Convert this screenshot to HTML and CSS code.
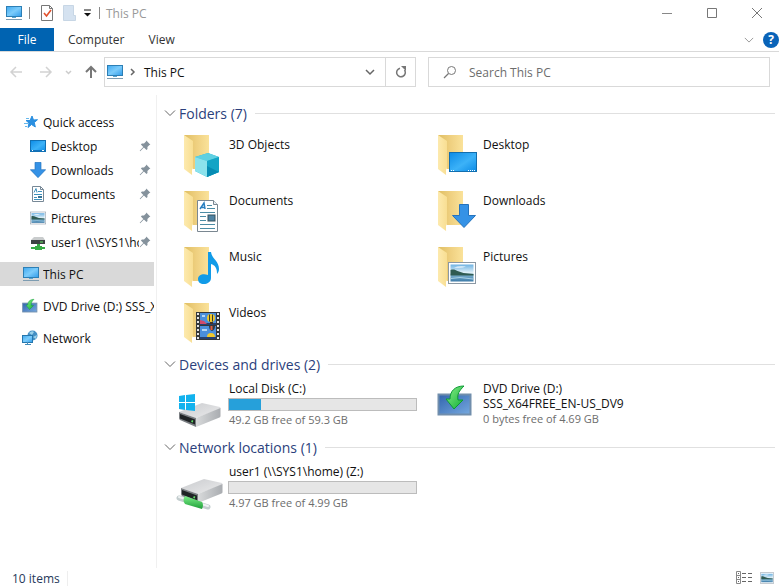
FILE: index.html
```html
<!DOCTYPE html>
<html lang="en">
<head>
<meta charset="utf-8">
<title>This PC</title>
<link rel="stylesheet" href="styles.css">
</head>
<body>
<svg class="defs" width="0" height="0" aria-hidden="true">
  <defs>
    <linearGradient id="screen" x1="0" y1="0" x2="1" y2="1"><stop offset="0" stop-color="#3fa9f0"/><stop offset=".5" stop-color="#7cccfb"/><stop offset="1" stop-color="#2f9bea"/></linearGradient>
    <linearGradient id="desk" x1="0" y1="0" x2="1" y2="1"><stop offset="0" stop-color="#0c8be6"/><stop offset=".55" stop-color="#3cb2f8"/><stop offset="1" stop-color="#0a8ae6"/></linearGradient>
    <linearGradient id="flap" x1="0" y1="0" x2="1" y2="0"><stop offset="0" stop-color="#fdeaae"/><stop offset="1" stop-color="#f8de92"/></linearGradient>
    <linearGradient id="back" x1="0" y1="0" x2="1" y2="0"><stop offset="0" stop-color="#dfbe62"/><stop offset=".5" stop-color="#efd080"/><stop offset="1" stop-color="#fae29a"/></linearGradient>
    <linearGradient id="top" x1="0" y1="0" x2="1" y2="1"><stop offset="0" stop-color="#c9cbce"/><stop offset="1" stop-color="#ebebec"/></linearGradient>
    <linearGradient id="edge" x1="0" y1="0" x2="1" y2="0"><stop offset="0" stop-color="#d8dadb"/><stop offset="1" stop-color="#a9acb0"/></linearGradient>
    <linearGradient id="green" x1="0" y1="0" x2="1" y2="1"><stop offset="0" stop-color="#8cf08a"/><stop offset="1" stop-color="#0fae35"/></linearGradient>
    <linearGradient id="pipe" x1="0" y1="0" x2="0" y2="1"><stop offset="0" stop-color="#7df08a"/><stop offset="1" stop-color="#1f9e38"/></linearGradient>
    <linearGradient id="sky" x1="0" y1="0" x2="0" y2="1"><stop offset="0" stop-color="#6eb2e2"/><stop offset=".5" stop-color="#e4f2f8"/><stop offset=".6" stop-color="#7fb3d0"/><stop offset="1" stop-color="#3c7aa8"/></linearGradient>
    <linearGradient id="blue" x1="0" y1="0" x2="1" y2="1"><stop offset="0" stop-color="#3164ad"/><stop offset="1" stop-color="#76a9e0"/></linearGradient>
  </defs>
  <symbol id="pc" viewBox="0 0 18 18">
    <rect x="1.5" y="2.5" width="15" height="10" fill="url(#screen)" stroke="#2d7fb5"/>
    <path d="M7 13h4v1H7z" fill="#58a5cf"/><path d="M1 15.500h16" stroke="#7d9cb1"/>
  </symbol>
  <symbol id="pin" viewBox="0 0 12 12">
    <path d="M7.300.6l4.100 4.100-1 .4-2 2 .1 2-1 1L4.900 7.500 1.200 11.200.7 10.700 4.300 6.900 1.900 4.400l1-1 2.100.2 2-2z" fill="#85929c"/>
  </symbol>
  <symbol id="folder" viewBox="0 0 48 48">
    <path d="M8 3h25v34H16z" fill="url(#back)"/>
    <path d="M8 3l9 6v27l-1 7-8-6z" fill="url(#flap)"/>
    <path d="M16 38l1-2v6h-1z" fill="#fff"/>
  </symbol>
  <symbol id="picture" viewBox="0 0 28 22">
    <rect x=".5" y=".5" width="27" height="21" fill="#fff" stroke="#8b98a4"/>
    <rect x="2.500" y="2.500" width="23" height="17" fill="url(#sky)"/>
    <path d="M2.500 8c3-1 5 0 7 1l6 2 10 1v1.500h-23z" fill="#2f5b52"/>
    <path d="M6 5.500q5-2 12-1-4 2-12 1" fill="#fff" opacity=".8"/>
    <path d="M3 16.500l9-1 13 1.500" stroke="#a9d2e6" fill="none"/>
  </symbol>
  <symbol id="down" viewBox="0 0 24 24">
    <path d="M7.500.5h9v11h7L12 23.500.5 11.500h7z" fill="#3592e6" stroke="#2573bd"/>
  </symbol>
  <symbol id="chev" viewBox="0 0 12 12"><path d="M1 3.500l5 5 5-5" fill="none" stroke="currentColor"/></symbol>
  <symbol id="dvd" viewBox="0 0 36 32">
    <rect x="1.500" y="9.500" width="32" height="20" fill="url(#blue)" stroke="#718eac" stroke-width="2"/>
    <path d="M27 1C18 1 13 6 13 14H9l8 10 9-9h-5c-1-6 1-9 6-14z" fill="url(#green)" stroke="#0c9a35"/>
  </symbol>
  <symbol id="drive" viewBox="0 0 44 24">
    <path d="M1 9L24 0l18 4q1 1 0 2L18 15z" fill="url(#top)"/>
    <path d="M1 9l17 6v9L2 17q-1-1-1-2z" fill="#7b7f83"/><path d="M2 11l15 5.500v5L2 15.500z" fill="#1f2325"/>
    <path d="M18 15L42.500 5v8q0 1-1 1.500L18 24z" fill="url(#edge)"/><path d="M13.500 18l1.500.6" stroke="#63e46a" stroke-width="2"/>
  </symbol>
</svg>

<header>
  <div class="titlebar">
    <svg class="i18" aria-hidden="true"><use href="#pc"/></svg>
    <i class="bar"></i>
    <button class="tool" aria-label="Properties"><svg width="12" height="16"><path d="M.5.5h8l3 3v12H.5z" fill="#fff" stroke="#777"/><path d="M8.500.5v3h3" fill="none" stroke="#777"/><path d="M3 8l2.500 3L10 5" fill="none" stroke="#e2502b" stroke-width="1.600"/></svg></button>
    <button class="tool" aria-label="New folder"><svg width="13" height="16"><path d="M.5.5h10v10h2v5H.5z" fill="#d5e2f0" stroke="#c7d6e5"/></svg></button>
    <button class="customize" aria-label="Customize"><svg width="7" height="8"><path d="M0 1h7" stroke="#111"/><path d="M0 4h7L3.500 7.500z" fill="#111"/></svg></button>
    <i class="bar"></i>
    <span class="title">This PC</span>
    <div class="window">
      <button aria-label="Minimize"><svg width="12" height="12"><path d="M1 6.500h10" stroke="#888"/></svg></button>
      <button aria-label="Maximize"><svg width="12" height="12"><path d="M1.500 1.500h9v9h-9z" fill="none" stroke="#777"/></svg></button>
      <button aria-label="Close"><svg width="12" height="12"><path d="M1 1l10 10M11 1L1 11" stroke="#777"/></svg></button>
    </div>
  </div>
  <nav class="tabs">
    <button class="file">File</button><button>Computer</button><button>View</button>
    <div class="help">
      <button aria-label="Expand ribbon"><svg width="10" height="10"><use href="#chev"/></svg></button>
      <button class="question" aria-label="Help">?</button>
    </div>
  </nav>
  <div class="address">
    <div class="arrows">
      <button aria-label="Back"><svg width="14" height="14"><path d="M13 7H2M7 2L2 7l5 5" fill="none" stroke="#d2d2d2" stroke-width="1.500"/></svg></button>
      <button aria-label="Forward"><svg width="14" height="14"><path d="M1 7h11M7 2l5 5-5 5" fill="none" stroke="#d2d2d2" stroke-width="1.500"/></svg></button>
      <button class="faint" aria-label="Recent"><svg width="7" height="7"><path d="M1 2l2.500 2.500L6 2" fill="none" stroke="#ccc" stroke-width="1.500"/></svg></button>
      <button aria-label="Up"><svg width="14" height="14"><path d="M7 13V2M2 7l5-5 5 5" fill="none" stroke="#777" stroke-width="2"/></svg></button>
    </div>
    <div class="path">
      <svg class="i18" aria-hidden="true"><use href="#pc"/></svg>
      <svg width="6" height="8" aria-hidden="true"><path d="M1 1l3 3-3 3" fill="none" stroke="#666" stroke-width="1.500"/></svg>
      <span>This PC</span>
      <button class="drop" aria-label="Locations"><svg width="10" height="10"><path d="M1 3l4 4 4-4" fill="none" stroke="#666" stroke-width="1.500"/></svg></button>
      <button class="refresh" aria-label="Refresh"><svg width="12" height="12"><path d="M9.500 4A4.300 4.300 0 1 1 5 2.300" fill="none" stroke="#777" stroke-width="1.500"/><path d="M6 0h5v5z" fill="#777"/></svg></button>
    </div>
    <label class="search">
      <svg width="14" height="14" aria-hidden="true"><circle cx="8.500" cy="5.500" r="4" fill="none" stroke="#777"/><path d="M5.500 8.500L1 13" stroke="#777" stroke-width="1.200"/></svg>
      <input type="search" placeholder="Search This PC" aria-label="Search This PC">
    </label>
  </div>
</header>

<div class="body">
  <nav class="side">
    <ul>
      <li><a href="#"><svg class="i16"><path d="M10 2l1.500 4 4-.3-3.200 2.800 1 4.500-3.800-2.500L6 13.500l1-4.500-3-2.500h4z" fill="#2b8fe0" stroke="#2b8fe0" stroke-linejoin="round"/><path d="M4 4.500h3M2 9.500h4M3 12.500h2" stroke="#65b7ec"/></svg><span>Quick access</span></a></li>
      <li class="sub"><a href="#"><svg class="i16"><rect x=".5" y="2.500" width="15" height="11" fill="url(#desk)" stroke="#1170b4"/><path d="M1 12.500h14" stroke="#1273bd"/><path d="M2 12.500h1M12 12.500h2" stroke="#fff"/></svg><span>Desktop</span></a><svg class="pin"><use href="#pin"/></svg></li>
      <li class="sub"><a href="#"><svg class="i16"><use href="#down"/></svg><span>Downloads</span></a><svg class="pin"><use href="#pin"/></svg></li>
      <li class="sub"><a href="#"><svg class="i16"><path d="M2.500.5h8l3 3v12h-11z" fill="#fff" stroke="#778896"/><path d="M10.500.5v3h3" fill="none" stroke="#778896"/><path d="M4 6.500l2-4 1 4M8 5.500h4M4 8.500h8M4 11.500h3M4 13.500h8" fill="none" stroke="#3e91bd"/><path d="M8 10h4v2H8z" fill="#357295"/></svg><span>Documents</span></a><svg class="pin"><use href="#pin"/></svg></li>
      <li class="sub"><a href="#"><svg class="i16"><use href="#picture"/></svg><span>Pictures</span></a><svg class="pin"><use href="#pin"/></svg></li>
      <li class="sub"><a href="#"><svg class="i16"><path d="M4 3h9l2 3H1z" fill="#c9cccd"/><path d="M1 6h14v4H1z" fill="#3d4242"/><path d="M10 8h3" stroke="#67e869"/><path d="M7 10h3v3H7zM1 13h14v2H1zM5 12h7v4H5z" fill="#38ac45"/></svg><span>user1 (\\SYS1\home) (Z:)</span></a><svg class="pin"><use href="#pin"/></svg></li>
    </ul>
    <ul><li class="selected"><a href="#"><svg class="i18"><use href="#pc"/></svg><span>This PC</span></a></li></ul>
    <ul><li><a href="#"><svg class="i16"><use href="#dvd"/></svg><span>DVD Drive (D:) SSS_X64FREE_EN-US_DV9</span></a></li></ul>
    <ul><li><a href="#"><svg class="i16"><circle cx="10.500" cy="5.500" r="5" fill="#438fc4"/><path d="M7 3q3-3 5-1l-2 3zM11 7l4-2-1 4z" fill="#9bd1ea"/><rect x=".5" y="5.500" width="10" height="7" fill="url(#screen)" stroke="#2677ad"/><path d="M3 14.500h6M5.500 12v2" stroke="#438cb9"/></svg><span>Network</span></a></li></ul>
  </nav>

  <main>
    <section>
      <h2><svg width="12" height="12"><use href="#chev"/></svg>Folders (7)</h2>
      <div class="grid folders">
        <a class="item" href="#"><svg class="i48"><use href="#folder"/><path d="M19 25l13-4 11 4v15l-12 5-12-6z" fill="#2cb9d4"/><path d="M19 25l13-4 11 4-12 4z" fill="#5fd0e2"/><path d="M19 25l12 4v16l-12-6z" fill="#8be2ec"/><path d="M31 29l12-4v15l-12 5z" fill="#14a4c5"/><path d="M31 45V34l12 6z" fill="#078cb3"/></svg><span class="text"><b>3D Objects</b></span></a>
        <a class="item" href="#"><svg class="i48"><use href="#folder"/><rect x="19.500" y="20.500" width="27" height="19" fill="url(#desk)" stroke="#126eae"/><path d="M21 38.500h4M38 38.500h8" stroke="#fff" stroke-dasharray="1 1"/></svg><span class="text"><b>Desktop</b></span></a>
        <a class="item" href="#"><svg class="i48"><use href="#folder"/><path d="M21.500 12.500h16l4 4v27h-20z" fill="#fff" stroke="#7a8791"/><path d="M37.500 12.500v4h4" fill="#e8eef2" stroke="#7a8791"/><path d="M24 21l4-6 1 6M25.500 19.500h3" fill="none" stroke="#287fc0" stroke-width="1.500"/><path d="M31 17.500h5M31 20.500h8M24 24.500h15M24 28.500h6M24 32.500h6M24 36.500h15M24 40.500h15" stroke="#4c8ca5"/><rect x="32" y="27" width="7" height="6" fill="#4f83a3" stroke="#37525f"/></svg><span class="text"><b>Documents</b></span></a>
        <a class="item" href="#"><svg class="i48"><use href="#folder"/><use href="#down" x="22" y="16" width="24" height="24"/></svg><span class="text"><b>Downloads</b></span></a>
        <a class="item" href="#"><svg class="i48"><use href="#folder"/><path d="M32 8h3c1 7 8 9 8 17 0 2-1 4-2 5 0-6-2-9-6-10v14c0 4-4 6-7 6-4 0-6-2-6-5 0-4 5-6 10-4z" fill="#119be8"/></svg><span class="text"><b>Music</b></span></a>
        <a class="item" href="#"><svg class="i48"><use href="#folder"/><use href="#picture" x="18" y="18" width="28" height="22"/></svg><span class="text"><b>Pictures</b></span></a>
        <a class="item" href="#"><svg class="i48"><use href="#folder"/><rect x="20" y="12" width="24" height="28" fill="#34383b"/><path d="M22 13v27M42 13v27" stroke="#e5e5e5" stroke-width="2" stroke-dasharray="2 2"/><path d="M24 13h16v12H24zM24 26h16v13H24z" fill="#4a8fdc"/><path d="M24 23h16v2H24zM24 37h16v2H24z" fill="#26406f"/><path d="M24 20l4 1 3 3h-7z" fill="#cf4a6c"/><circle cx="35" cy="18" r="4" fill="#f0c92c"/><path d="M33 14.500h1v7h-1zM36 14.500h1v7h-1z" fill="#2f3a34"/><path d="M34 22h3v2h-3z" fill="#432"/><path d="M33 26h6q0 4-3 5-3-1-3-5z" fill="#2b3c49"/><path d="M34.500 26h2v4h-2z" fill="#e85a3c"/><path d="M31 37q0-4 4-4t4 4z" fill="#f0c92c"/><path d="M26 16h3M26 30h5" stroke="#b5d8f5" stroke-width="2"/></svg><span class="text"><b>Videos</b></span></a>
      </div>
    </section>
    <section>
      <h2><svg width="12" height="12"><use href="#chev"/></svg>Devices and drives (2)</h2>
      <div class="grid drives">
        <a class="item" href="#"><svg class="i48"><use href="#drive" x="2" y="22" width="44" height="24"/><path d="M3 15l6-1v7H3zM10 14l9-1v8h-9zM3 22h6v7l-6-1zM10 22h9v8l-9-1z" fill="#12b2ee"/></svg><span class="text"><b>Local Disk (C:)</b><span class="meter" role="img" aria-label="Used space"><i style="width:17%"></i></span><small>49.2 GB free of 59.3 GB</small></span></a>
        <a class="item" href="#"><svg class="i48"><use href="#dvd" x="7" y="4" width="36" height="32"/></svg><span class="text"><b>DVD Drive (D:)<br>SSS_X64FREE_EN-US_DV9</b><small>0 bytes free of 4.69 GB</small></span></a>
      </div>
    </section>
    <section>
      <h2><svg width="12" height="12"><use href="#chev"/></svg>Network locations (1)</h2>
      <div class="grid drives">
        <a class="item" href="#"><svg class="i48"><path d="M3 34l29 9" stroke="#c3cdce" stroke-width="5" stroke-linecap="round"/><path d="M3 33l29 9" stroke="#eef2f2" stroke-width="2" stroke-linecap="round"/><use href="#drive" x="4" y="15" width="44" height="24"/><path d="M9 32l17 6q2 3 0 7L9 40q-3-4 0-8z" fill="url(#pipe)"/></svg><span class="text"><b>user1 (\\SYS1\home) (Z:)</b><span class="meter" role="img" aria-label="Used space"><i style="width:0%"></i></span><small>4.97 GB free of 4.99 GB</small></span></a>
      </div>
    </section>
  </main>
</div>

<footer>
  <span class="count">10 items</span>
  <button aria-label="Details view"><svg width="16" height="14"><path d="M.5.5h4v12h-4zM.5 4.500h4M.5 8.500h4" fill="none" stroke="#888"/><path d="M2 2.500h1M2 6.500h1M2 10.500h1M6 2.500h4M12 2.500h4M6 6.500h4M12 6.500h4M6 10.500h4M12 10.500h4" stroke="#666"/></svg></button>
  <button aria-label="Large icons view"><svg width="14" height="12"><use href="#picture"/></svg></button>
</footer>
</body>
</html>
```
FILE: styles.css
```css
* { box-sizing: border-box; }
body {
  margin: 0;
  min-height: 100vh;
  display: flex;
  flex-direction: column;
  background: #fff;
  color: #111;
  font: 12px/15px "Open Sans", "Noto Sans", sans-serif;
}
svg { display: block; flex: none; }
.defs { position: absolute; }
button {
  display: flex;
  align-items: center;
  justify-content: center;
  padding: 0;
  border: 0;
  background: none;
  color: inherit;
  font: inherit;
}
a { color: inherit; text-decoration: none; }
.i16 { width: 16px; height: 16px; }
.i18 { width: 18px; height: 18px; }
.i48 { width: 48px; height: 48px; }

.titlebar { display: flex; align-items: center; height: 26px; padding-left: 5px; }
.titlebar .bar { width: 1px; height: 12px; margin: 0 6px; background: #888; }
.titlebar .tool { margin: 0 5px; }
.titlebar .customize { margin: 0 2px 0 3px; }
.title { color: #999; }
.window { display: flex; margin-left: auto; }
.window button { width: 45px; height: 26px; }

.tabs { display: flex; height: 24px; margin-top: 2px; border-bottom: 1px solid #d9d9d9; color: #333; }
.tabs > button { padding: 0 10px 0 14px; }
.tabs .file { width: 54px; padding: 0; background: #0063b1; color: #fff; }
.help { display: flex; align-items: center; gap: 9px; margin-left: auto; color: #888; }
.help .question { width: 16px; height: 16px; border-radius: 50%; background: #0963b8; color: #fff; font-weight: 700; }

.address { display: flex; padding: 5px 9px 8px; }
.arrows { display: flex; align-items: center; width: 95px; gap: 16px; }
.arrows .faint { margin: 0 -4px; }
.path, .search { display: flex; align-items: center; height: 30px; border: 1px solid #d9d9d9; }
.path { flex: 309 1 0; margin-right: 12px; padding-left: 1px; gap: 6px; }
.path span { margin-left: 2px; }
.path .drop { width: 30px; height: 28px; margin-left: auto; }
.path .refresh { width: 30px; height: 28px; margin-left: -6px; border-left: 1px solid #d9d9d9; }
.search { flex: 326 1 0; padding-left: 14px; gap: 12px; }
.search input { flex: 1; min-width: 0; padding: 0; border: 0; outline: 0; background: none; font: inherit; }
.search input::placeholder { color: #6d6d6d; opacity: 1; }

.body { display: flex; flex: 1; }
.side { width: 157px; padding: 15px 2px 0 0; border-right: 1px solid #f0f0f0; }
.side ul { margin: 0 0 8px; padding: 0; list-style: none; }
.side li { display: flex; align-items: center; height: 24px; padding-left: 22px; }
.side li.sub { padding: 0 3px 0 30px; }
.side li.selected { background: #d9d9d9; }
.side a { display: flex; align-items: center; flex: 1; min-width: 0; gap: 5px; }
.side .i18 { margin-right: -2px; }
.side span { overflow: hidden; white-space: nowrap; }
.pin { width: 12px; height: 12px; }

main { flex: 1; min-width: 0; padding: 7px 4px 0 7px; }
h2 {
  display: flex;
  align-items: center;
  gap: 3px;
  height: 22px;
  margin: 0;
  color: #2c3f7c;
  font-size: 14px;
  font-weight: 400;
}
h2 svg { color: #666; }
h2::after { content: ""; flex: 1; height: 1px; margin-left: 5px; background: #e0e0e0; }
.grid { display: grid; grid-template-columns: repeat(auto-fill, 254px); padding-left: 12px; }
.folders { padding-top: 4px; padding-bottom: 1px; grid-auto-rows: 56px; }
.drives { grid-auto-rows: 61px; }
.item { display: flex; gap: 4px; padding-right: 13px; }
.folders .item { padding-top: 4px; }
.folders .text { padding-top: 5px; }
.drives .item { padding-top: 6px; }
.text { flex: 1; white-space: nowrap; }
.text b, .text small { display: block; padding-left: 1px; font-weight: 400; }
.text small { color: #6d6d6d; font-size: 11px; }
.meter { display: block; height: 13px; margin: 2px 0 1px; border: 1px solid #bcbcbc; background: #e6e6e6; }
.meter i { display: block; height: 100%; background: #26a0da; }

footer { display: flex; align-items: center; height: 20px; padding: 0 5px 0 12px; gap: 8px; color: #26395b; }
.count { margin-right: auto; padding-right: 7px; border-right: 1px solid #eee; }
```
